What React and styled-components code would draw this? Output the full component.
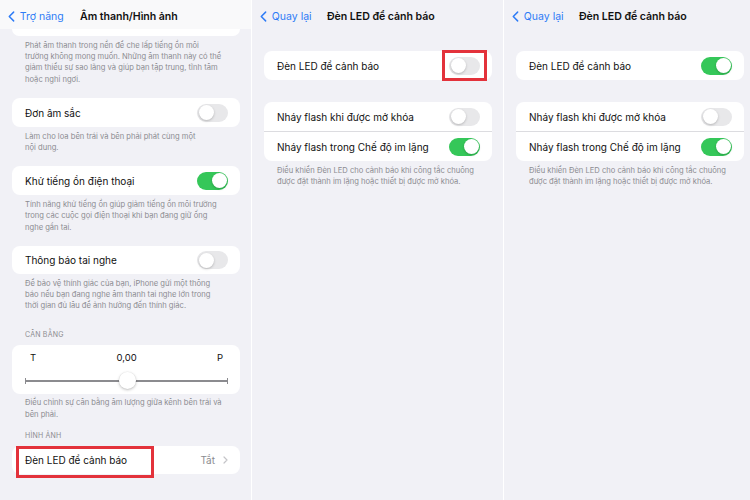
import React from "react";
import styled, { createGlobalStyle } from "styled-components";

const GlobalStyle = createGlobalStyle`
  html, body {
    margin: 0;
    padding: 0;
    background: #ffffff;
  }
  body {
    font-family: Inter, "Noto Sans", sans-serif;
    -webkit-font-smoothing: antialiased;
  }
`;

const Page = styled.div`
  display: flex;
  gap: 1px;
  width: 750px;
  height: 500px;
  overflow: hidden;
  background: #ffffff;
`;

const Panel = styled.section`
  position: relative;
  flex: 0 0 251px;
  height: 500px;
  background: #f1f1f6;
  box-sizing: border-box;
  padding: 0 11px 0 12px;
`;

// Navigation bar
const Nav = styled.header`
  display: flex;
  align-items: center;
  height: 29px;
  box-sizing: border-box;
  margin: 0 -11px 0 -12px;
  padding: 4px 0 0 8px;
  background: ${(p) => (p.$light ? "#f9f9fa" : "transparent")};
`;

const Back = styled.div`
  display: flex;
  align-items: center;
  gap: 5px;
  color: #2e7cf6;
  font-size: 10.5px;
  width: ${(p) => p.$w}px;
  flex: 0 0 auto;
`;

const Title = styled.h1`
  margin: 0;
  font-size: 10.6px;
  font-weight: 600;
  color: #111;
  letter-spacing: -0.05px;
`;

const Stub = styled.div`
  height: 7px;
  background: #fff;
  border-radius: 0 0 8px 8px;
`;

const Card = styled.div`
  background: #fff;
  border-radius: 8px;
  margin-top: ${(p) => p.$mt || 0}px;
  overflow: hidden;
`;

const Row = styled.div`
  display: flex;
  align-items: center;
  justify-content: space-between;
  height: ${(p) => p.$h || 29}px;
  padding: 0 12px 0 13px;
  position: relative;
  font-size: 10px;
  color: #111;
  & + & {
    border-top: 0.5px solid #dcdce0;
  }
`;

const Footer = styled.p`
  margin: 0;
  padding: 3.5px 14px 0 13px;
  font-size: 7.6px;
  line-height: 11.4px;
  color: #8c8c91;
`;

const Header = styled.div`
  padding: ${(p) => p.$pt}px 13px 5px;
  font-size: 7px;
  line-height: 10px;
  color: #8c8c91;
  text-transform: uppercase;
  letter-spacing: 0.2px;
`;

const Track = styled.span`
  display: inline-block;
  position: relative;
  width: 31px;
  height: 18px;
  border-radius: 9px;
  background: ${(p) => (p.$on ? "#35c759" : "#e8e8ea")};
  flex: 0 0 auto;
`;

const Knob = styled.span`
  position: absolute;
  top: 1.5px;
  left: ${(p) => (p.$on ? 14.5 : 1.5)}px;
  width: 15px;
  height: 15px;
  border-radius: 50%;
  background: #fff;
  box-shadow: 0 1px 2.5px rgba(0, 0, 0, 0.22);
`;

const Switch = ({ on }) => (
  <Track $on={on}>
    <Knob $on={on} />
  </Track>
);

const Detail = styled.span`
  display: flex;
  align-items: center;
  gap: 8px;
  color: #8c8c91;
  font-size: 10px;
`;

// Balance slider
const SliderCard = styled(Card)`
  height: 49px;
  padding: 0 12px 0 13px;
  position: relative;
`;

const SliderLabels = styled.div`
  display: flex;
  justify-content: space-between;
  padding: 6px 5px 0 5px;
  font-size: 9.5px;
  color: #111;
  line-height: 14px;
`;

const SliderLine = styled.div`
  position: relative;
  margin-top: 15px;
  height: 2px;
  background: #8b8b8f;
  border-left: 1px solid #8b8b8f;
  &::before,
  &::after {
    content: "";
    position: absolute;
    top: -2px;
    width: 1px;
    height: 6px;
    background: #8b8b8f;
  }
  &::before {
    left: -1px;
  }
  &::after {
    right: 0;
  }
`;

const Thumb = styled.span`
  position: absolute;
  left: 50%;
  top: 50%;
  width: 17px;
  height: 17px;
  margin: -8.5px 0 0 -8.5px;
  border-radius: 50%;
  background: #fff;
  box-shadow: 0 1px 3px rgba(0, 0, 0, 0.25), 0 0 0 0.5px rgba(0, 0, 0, 0.05);
`;

// Red annotation frames
const Mark = styled.div`
  position: absolute;
  left: ${(p) => p.$x}px;
  top: ${(p) => p.$y}px;
  width: ${(p) => p.$w}px;
  height: ${(p) => p.$h}px;
  border: 3px solid #e3323b;
  box-sizing: border-box;
  pointer-events: none;
`;

const Chevron = ({ color = "#2e7cf6", size = 11 }) => (
  <svg width={size * 0.62} height={size} viewBox="0 0 7 11" fill="none">
    <path
      d="M5.8 1L1.3 5.5 5.8 10"
      stroke={color}
      strokeWidth="1.5"
      strokeLinecap="round"
      strokeLinejoin="round"
    />
  </svg>
);

const SmallChevron = () => (
  <svg width="5" height="8" viewBox="0 0 5 8" fill="none">
    <path
      d="M1 1l3 3-3 3"
      stroke="#c4c4c8"
      strokeWidth="1.2"
      strokeLinecap="round"
      strokeLinejoin="round"
    />
  </svg>
);

const LedPanel = ({ ledOn, mark }) => (
  <Panel>
    <Nav>
      <Back $w={67}>
        <Chevron />
        Quay lại
      </Back>
      <Title>Đèn LED để cảnh báo</Title>
    </Nav>
    <Card $mt={22}>
      <Row>
        Đèn LED để cảnh báo
        <Switch on={ledOn} />
      </Row>
    </Card>
    <Card $mt={22}>
      <Row>
        Nháy flash khi được mở khóa
        <Switch on={false} />
      </Row>
      <Row>
        Nháy flash trong Chế độ im lặng
        <Switch on />
      </Row>
    </Card>
    <Footer>
      Điều khiển Đèn LED cho cảnh báo khi công tắc chuông
      <br />
      được đặt thành im lặng hoặc thiết bị được mở khóa.
    </Footer>
    {mark && <Mark $x={190} $y={50} $w={45} $h={31} />}
  </Panel>
);

const AudioPanel = () => (
  <Panel>
    <Nav $light>
      <Back $w={72}>
        <Chevron />
        Trợ năng
      </Back>
      <Title>Âm thanh/Hình ảnh</Title>
    </Nav>
    <Stub />
    <Footer>
      Phát âm thanh trong nền để che lấp tiếng ồn môi
      <br />
      trường không mong muốn. Những âm thanh này có thể
      <br />
      giảm thiểu sự sao lãng và giúp bạn tập trung, tĩnh tâm
      <br />
      hoặc nghỉ ngơi.
    </Footer>
    <Card $mt={13}>
      <Row>
        Đơn âm sắc
        <Switch on={false} />
      </Row>
    </Card>
    <Footer>
      Làm cho loa bên trái và bên phải phát cùng một
      <br />
      nội dung.
    </Footer>
    <Card $mt={13}>
      <Row>
        Khử tiếng ồn điện thoại
        <Switch on />
      </Row>
    </Card>
    <Footer>
      Tính năng khử tiếng ồn giúp giảm tiếng ồn môi trường
      <br />
      trong các cuộc gọi điện thoại khi bạn đang giữ ống
      <br />
      nghe gần tai.
    </Footer>
    <Card $mt={13}>
      <Row $h={28}>
        Thông báo tai nghe
        <Switch on={false} />
      </Row>
    </Card>
    <Footer>
      Để bảo vệ thính giác của bạn, iPhone gửi một thông
      <br />
      báo nếu bạn đang nghe âm thanh tai nghe lớn trong
      <br />
      thời gian đủ lâu để ảnh hưởng đến thính giác.
    </Footer>
    <Header $pt={18}>Cân bằng</Header>
    <SliderCard>
      <SliderLabels>
        <span>T</span>
        <span>0,00</span>
        <span>P</span>
      </SliderLabels>
      <SliderLine>
        <Thumb />
      </SliderLine>
    </SliderCard>
    <Footer>
      Điều chỉnh sự cân bằng âm lượng giữa kênh bên trái và
      <br />
      bên phải.
    </Footer>
    <Header $pt={11}>Hình ảnh</Header>
    <Card>
      <Row $h={28}>
        Đèn LED để cảnh báo
        <Detail>
          Tắt
          <SmallChevron />
        </Detail>
      </Row>
    </Card>
    <Mark $x={16} $y={446} $w={138} $h={32} />
  </Panel>
);

export default function App() {
  return (
    <>
      <GlobalStyle />
      <Page>
        <AudioPanel />
        <LedPanel ledOn={false} mark />
        <LedPanel ledOn />
      </Page>
    </>
  );
}
